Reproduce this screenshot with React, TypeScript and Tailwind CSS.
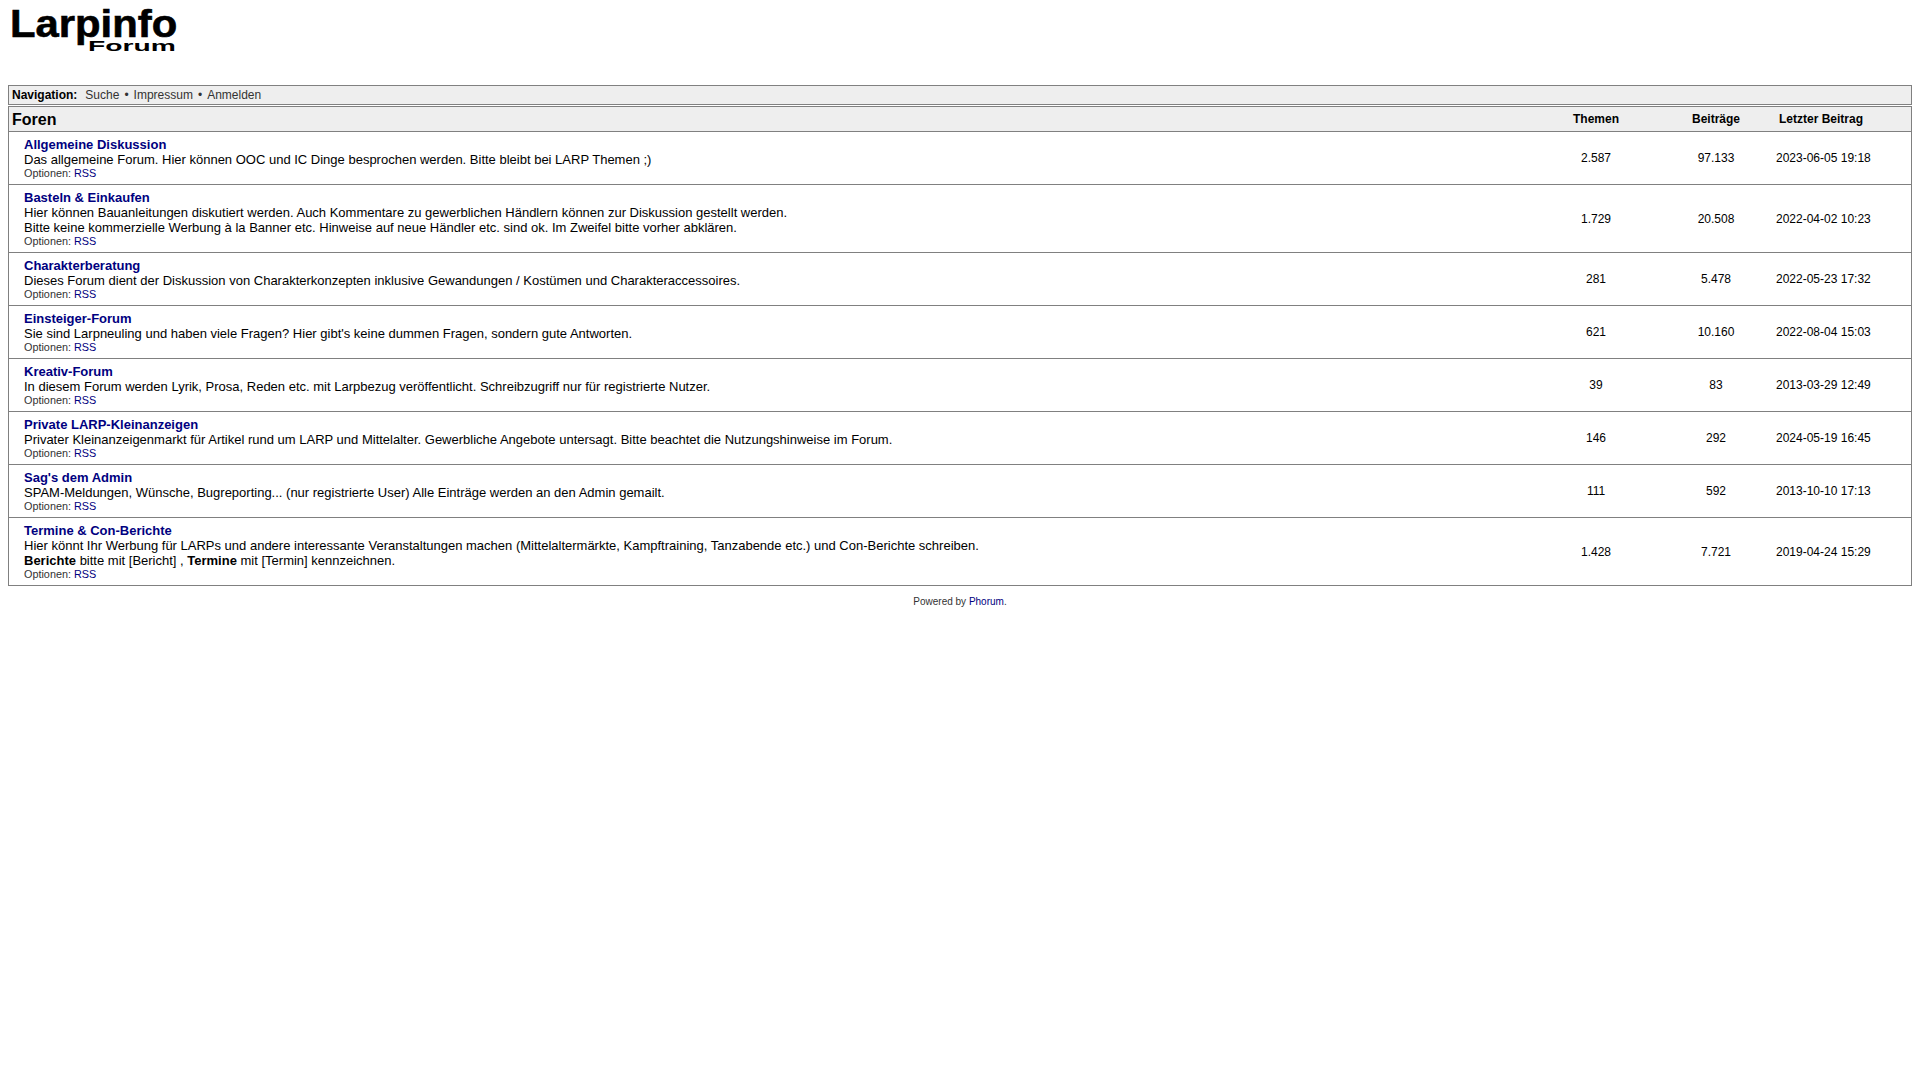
const FORUMS = [
  {
    title: "Allgemeine Diskussion",
    lines: [<>Das allgemeine Forum. Hier können OOC und IC Dinge besprochen werden. Bitte bleibt bei LARP Themen ;)</>],
    themen: "2.587",
    posts: "97.133",
    last: "2023-06-05 19:18",
  },
  {
    title: "Basteln & Einkaufen",
    lines: [
      <>Hier können Bauanleitungen diskutiert werden. Auch Kommentare zu gewerblichen Händlern können zur Diskussion gestellt werden.</>,
      <>Bitte keine kommerzielle Werbung à la Banner etc. Hinweise auf neue Händler etc. sind ok. Im Zweifel bitte vorher abklären.</>,
    ],
    themen: "1.729",
    posts: "20.508",
    last: "2022-04-02 10:23",
  },
  {
    title: "Charakterberatung",
    lines: [<>Dieses Forum dient der Diskussion von Charakterkonzepten inklusive Gewandungen / Kostümen und Charakteraccessoires.</>],
    themen: "281",
    posts: "5.478",
    last: "2022-05-23 17:32",
  },
  {
    title: "Einsteiger-Forum",
    lines: [<>Sie sind Larpneuling und haben viele Fragen? Hier gibt's keine dummen Fragen, sondern gute Antworten.</>],
    themen: "621",
    posts: "10.160",
    last: "2022-08-04 15:03",
  },
  {
    title: "Kreativ-Forum",
    lines: [<>In diesem Forum werden Lyrik, Prosa, Reden etc. mit Larpbezug veröffentlicht. Schreibzugriff nur für registrierte Nutzer.</>],
    themen: "39",
    posts: "83",
    last: "2013-03-29 12:49",
  },
  {
    title: "Private LARP-Kleinanzeigen",
    lines: [<>Privater Kleinanzeigenmarkt für Artikel rund um LARP und Mittelalter. Gewerbliche Angebote untersagt. Bitte beachtet die Nutzungshinweise im Forum.</>],
    themen: "146",
    posts: "292",
    last: "2024-05-19 16:45",
  },
  {
    title: "Sag's dem Admin",
    lines: [<>SPAM-Meldungen, Wünsche, Bugreporting... (nur registrierte User) Alle Einträge werden an den Admin gemailt.</>],
    themen: "111",
    posts: "592",
    last: "2013-10-10 17:13",
  },
  {
    title: "Termine & Con-Berichte",
    lines: [
      <>Hier könnt Ihr Werbung für LARPs und andere interessante Veranstaltungen machen (Mittelaltermärkte, Kampftraining, Tanzabende etc.) und Con-Berichte schreiben.</>,
      <><b>Berichte</b> bitte mit [Bericht] , <b>Termine</b> mit [Termin] kennzeichnen.</>,
    ],
    themen: "1.428",
    posts: "7.721",
    last: "2019-04-24 15:29",
  },
]

function Logo() {
  return (
    <div className="w-[172px] pt-[4px] text-black font-['Liberation_Sans',sans-serif] font-bold">
      <div className="h-[30px] ml-[2px] text-[38px] leading-[31px] origin-left scale-x-[1.1] whitespace-nowrap [-webkit-text-stroke:0.6px_black]">Larpinfo</div>
      <div className="h-[13px] ml-[80px] text-[15px] leading-[13px] origin-left scale-x-[1.88] whitespace-nowrap">Forum</div>
    </div>
  )
}

export default function App() {
  return (
    <div className="bg-white min-h-[1080px] px-2 pt-[5px] text-[#000] text-[13px] leading-[15px] font-['Liberation_Sans',Arial,sans-serif]">
      <div className="h-[80px]">
        <Logo />
      </div>

      <div className="h-[20px] flex items-center bg-[#eeeeee] border border-[#808080] pl-[3px] text-[12px] text-[#333]">
        <b className="text-black mr-[8px]">Navigation:</b>
        <span>Suche</span>
        <span className="mx-[5px]">•</span>
        <span>Impressum</span>
        <span className="mx-[5px]">•</span>
        <span>Anmelden</span>
      </div>

      <div className="mt-[1px] border border-[#808080]">
        <div className="h-[25px] flex items-center bg-[#eeeeee] border-b border-[#808080] text-[12px] font-bold">
          <div className="flex-1 pl-[3px] text-[16px]">Foren</div>
          <div className="w-[120px] text-center">Themen</div>
          <div className="w-[120px] text-center">Beiträge</div>
          <div className="w-[135px] pl-[3px]">Letzter Beitrag</div>
        </div>

        {FORUMS.map((forum, i) => (
          <div key={forum.title} className={`flex items-center text-[12px] ${i < FORUMS.length - 1 ? "border-b border-[#808080]" : ""}`}>
            <div className="flex-1 pl-[15px] pt-[5px] pb-[4px] text-[13px]">
              <a className="block font-bold text-[#000080]">{forum.title}</a>
              {forum.lines.map((line, j) => (
                <div key={j}>{line}</div>
              ))}
              <div className="text-[10.83px] leading-[13px] text-[#333]">
                Optionen: <a className="text-[#000080]">RSS</a>
              </div>
            </div>
            {/* two-line rows sit a pixel lower in the reference */}
            <div className={`w-[120px] text-center ${forum.lines.length > 1 ? "pt-[2px]" : ""}`}>{forum.themen}</div>
            <div className={`w-[120px] text-center ${forum.lines.length > 1 ? "pt-[2px]" : ""}`}>{forum.posts}</div>
            <div className={`w-[135px] ${forum.lines.length > 1 ? "pt-[2px]" : ""}`}>{forum.last}</div>
          </div>
        ))}
      </div>

      <div className="mt-[10px] text-center text-[10px] leading-[12px] text-[#333]">
        Powered by <a className="text-[#000080]">Phorum</a>.
      </div>
    </div>
  )
}
